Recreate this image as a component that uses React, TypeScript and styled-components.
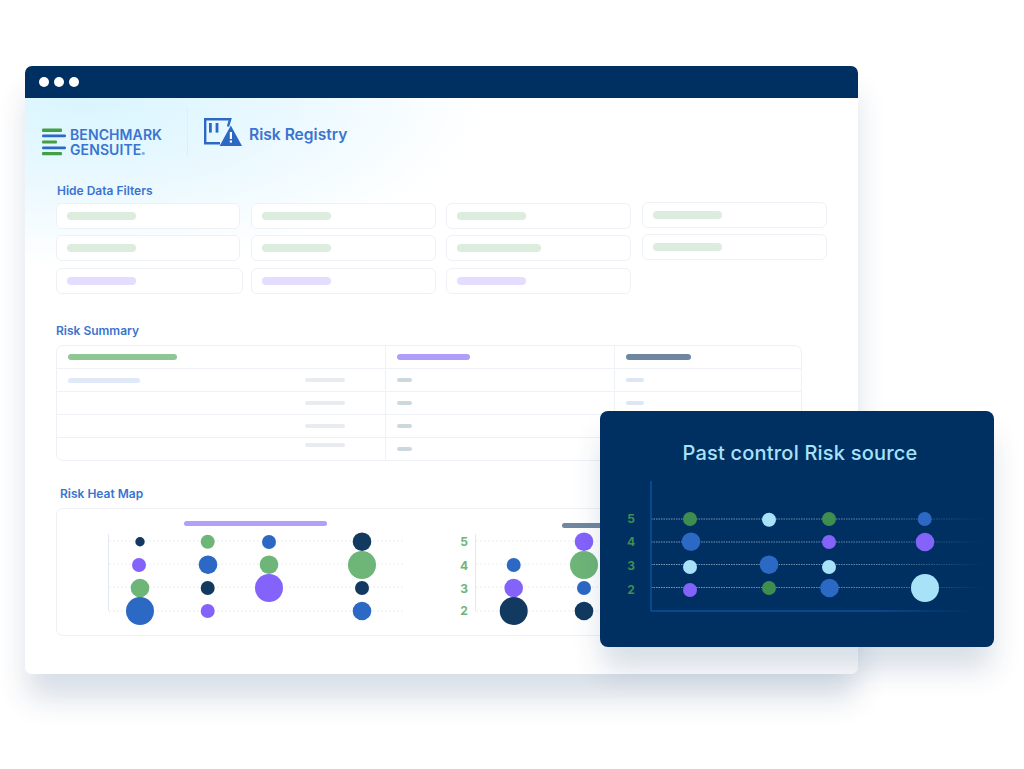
import styled, { createGlobalStyle } from 'styled-components'

const NAVY = '#002f61'
const DEEP = '#12395f'
const BLUE = '#2c69c4'
const GREEN = '#6eb578'
const DARK_GREEN = '#3e8e4f'
const PURPLE = '#8463fb'
const SKY = '#a8e2f8'
const TEXT_BLUE = '#3a74cf'

type Bubble = [number, number, number, string]

const leftBubbles: Bubble[] = [
  [140, 541.7, 4.7, DEEP],
  [139, 565, 7, PURPLE],
  [140, 588, 9.3, GREEN],
  [140, 611, 14, BLUE],
  [207.7, 541.7, 7, GREEN],
  [208, 564.7, 9.3, BLUE],
  [207.7, 588, 7, DEEP],
  [207.7, 611, 7, PURPLE],
  [269, 542, 7, BLUE],
  [269, 564.7, 9.3, GREEN],
  [269, 588, 14, PURPLE],
  [362, 541.7, 9.3, DEEP],
  [362, 565, 14, GREEN],
  [362, 588, 7, DEEP],
  [362, 611, 9.3, BLUE],
]

const rightBubbles: Bubble[] = [
  [513.7, 565, 7, BLUE],
  [513.7, 588, 9.3, PURPLE],
  [513.7, 611, 14, DEEP],
  [584, 541.7, 9.3, PURPLE],
  [584, 565, 14, GREEN],
  [584, 588, 7, BLUE],
  [584, 611, 9.3, DEEP],
]

const cardBubbles: Bubble[] = [
  [690, 519, 7, DARK_GREEN],
  [691, 541.7, 9.3, BLUE],
  [690, 567, 7, SKY],
  [690, 590, 7, PURPLE],
  [769, 519.7, 7, SKY],
  [769, 564.7, 9.3, BLUE],
  [769, 588, 7, DARK_GREEN],
  [829, 519, 7, DARK_GREEN],
  [829, 542, 7, PURPLE],
  [829, 567, 7, SKY],
  [829.5, 588, 9.3, BLUE],
  [924.7, 519, 7, BLUE],
  [925, 542, 9.3, PURPLE],
  [925, 588, 14, SKY],
]

const filterColumns = [
  {
    offset: 0,
    cards: [
      { width: 184, bar: 69, tone: 'green' },
      { width: 184, bar: 69, tone: 'green' },
      { width: 187, bar: 69, tone: 'purple' },
    ],
  },
  {
    offset: 0,
    cards: [
      { width: 185, bar: 69, tone: 'green' },
      { width: 185, bar: 69, tone: 'green' },
      { width: 185, bar: 69, tone: 'purple' },
    ],
  },
  {
    offset: 0,
    cards: [
      { width: 185, bar: 69, tone: 'green' },
      { width: 185, bar: 84, tone: 'green' },
      { width: 185, bar: 69, tone: 'purple' },
    ],
  },
  {
    offset: 1,
    cards: [
      { width: 185, bar: 69, tone: 'green' },
      { width: 185, bar: 69, tone: 'green' },
    ],
  },
]

const summaryRows = [0, 1, 2, 3]

function Bubbles({ items }: { items: Bubble[] }) {
  return (
    <>
      {items.map(([cx, cy, r, fill]) => (
        <circle key={`${cx}-${cy}`} cx={cx} cy={cy} r={r} fill={fill} />
      ))}
    </>
  )
}

function LogoMark() {
  return (
    <svg width="24" height="28" viewBox="42 127.5 24 28">
      <rect x="42" y="128" width="20" height="3.4" rx="1" fill="#43a047" />
      <rect x="42" y="134" width="24" height="2.8" rx="1.2" fill={BLUE} />
      <rect x="42" y="140" width="15" height="3" rx="1" fill="#43a047" />
      <rect x="42" y="146" width="24" height="2.8" rx="1.2" fill={BLUE} />
      <rect x="42" y="151.6" width="20" height="3.2" rx="1" fill="#43a047" />
    </svg>
  )
}

function RegistryIcon() {
  return (
    <svg width="40" height="30" viewBox="202 116 40 30">
      <path
        d="M227 125.5 L229.2 118.2 H204.2 V142.2 H219"
        fill="none"
        stroke={BLUE}
        strokeWidth="2.4"
      />
      <rect x="208" y="122" width="2.8" height="9.6" fill={BLUE} />
      <rect x="214.6" y="122" width="2.8" height="9.6" fill={BLUE} />
      <path d="M229.8 124.6 L241 145 H218.6 Z" fill={BLUE} />
      <rect x="228.8" y="131" width="2.2" height="7" fill="#fff" />
      <rect x="228.8" y="139.4" width="2.2" height="2.2" fill="#fff" />
    </svg>
  )
}

function LeftChart() {
  return (
    <ChartSvg width="370" height="122" viewBox="60 515 370 122">
      <rect x="184" y="521" width="143" height="5" rx="2.5" fill="#b19ffb" />
      {[541, 564, 587, 611].map((y) => (
        <line key={y} x1="109" x2="405" y1={y} y2={y} stroke="#e9edf1" strokeDasharray="2 2" />
      ))}
      <line x1="108.5" x2="108.5" y1="534" y2="611" stroke="#e3e9f1" />
      <Bubbles items={leftBubbles} />
    </ChartSvg>
  )
}

function RightChart() {
  return (
    <ChartSvg width="360" height="122" viewBox="440 515 360 122">
      <rect x="562" y="523" width="100" height="5" rx="2.5" fill="#71879f" />
      {[
        ['5', 545.5],
        ['4', 569.5],
        ['3', 592.5],
        ['2', 614.5],
      ].map(([label, y]) => (
        <AxisLabel key={label} x="464" y={y} fill="#6fb57a">
          {label}
        </AxisLabel>
      ))}
      {[541, 564, 587, 611].map((y) => (
        <line key={y} x1="476" x2="640" y1={y} y2={y} stroke="#e9edf1" strokeDasharray="2 2" />
      ))}
      <line x1="475.5" x2="475.5" y1="534" y2="611" stroke="#e3e9f1" />
      <Bubbles items={rightBubbles} />
    </ChartSvg>
  )
}

function CardChart() {
  return (
    <ChartSvg width="394" height="155" viewBox="600 470 394 155">
      <defs>
        <linearGradient id="gridFade" gradientUnits="userSpaceOnUse" x1="651" x2="985" y1="0" y2="0">
          <stop offset="0" stopColor="#7d9cbb" />
          <stop offset="0.7" stopColor="#5f83a8" />
          <stop offset="1" stopColor="#5f83a8" stopOpacity="0" />
        </linearGradient>
        <linearGradient id="baseFade" gradientUnits="userSpaceOnUse" x1="651" x2="975" y1="0" y2="0">
          <stop offset="0" stopColor="#0d5099" />
          <stop offset="0.7" stopColor="#0d5099" />
          <stop offset="1" stopColor="#0d5099" stopOpacity="0" />
        </linearGradient>
      </defs>
      {[
        ['5', 522.5],
        ['4', 546],
        ['3', 569.5],
        ['2', 593.5],
      ].map(([label, y]) => (
        <AxisLabel key={label} x="631" y={y} fill={DARK_GREEN}>
          {label}
        </AxisLabel>
      ))}
      {[519, 542, 564.5, 587.5].map((y) => (
        <line key={y} x1="651" x2="985" y1={y} y2={y} stroke="url(#gridFade)" strokeDasharray="1.5 1" />
      ))}
      <line x1="651" x2="651" y1="481" y2="611" stroke="#0d5099" strokeWidth="1.6" />
      <line x1="651" x2="975" y1="611" y2="611" stroke="url(#baseFade)" strokeWidth="1.6" />
      <Bubbles items={cardBubbles} />
    </ChartSvg>
  )
}

export default function App() {
  return (
    <Stage>
      <GlobalStyle />
      <Window>
        <TitleBar>
          <Dot />
          <Dot />
          <Dot />
        </TitleBar>
        <Body>
          <Masthead>
            <Logo>
              <LogoMark />
              <LogoText>
                <span>BENCHMARK</span>
                <span>
                  GENSUITE<small>®</small>
                </span>
              </LogoText>
            </Logo>
            <Divider />
            <RegistryIcon />
            <PageTitle>Risk Registry</PageTitle>
          </Masthead>

          <Content>
            <SectionLabel $indent={1} $top={28} $bottom={5}>
              Hide Data Filters
            </SectionLabel>
            <Filters>
              {filterColumns.map((column, idx) => (
                <FilterColumn key={idx} $offset={column.offset}>
                  {column.cards.map((card, cardIdx) => (
                    <FilterCard key={cardIdx} $width={card.width}>
                      <FilterBar $width={card.bar} $tone={card.tone} />
                    </FilterCard>
                  ))}
                </FilterColumn>
              ))}
            </Filters>

            <SectionLabel $indent={0} $top={30} $bottom={7}>
              Risk Summary
            </SectionLabel>
            <Table>
              <Row>
                <Cell>
                  <Bar $width={109} $height={6} $color="#8fc794" />
                </Cell>
                <Cell>
                  <Bar $width={73} $height={6} $color="#b09cfb" />
                </Cell>
                <Cell>
                  <Bar $width={65} $height={6} $color="#6f86a3" />
                </Cell>
              </Row>
              {summaryRows.map((row) => (
                <Row key={row}>
                  <Cell $spread>
                    {row === 0 ? <Bar $width={72} $height={5} $color="#dfe9f7" /> : <span />}
                    <Bar $width={40} $height={4} $color="#e8ecf0" $raise={row === 3 ? 4 : 0} />
                  </Cell>
                  <Cell $nudge={1}>
                    <Bar $width={15} $height={4} $color="#cdd8de" />
                  </Cell>
                  <Cell>
                    <Bar $width={18} $height={4} $color="#dbe7f5" />
                  </Cell>
                </Row>
              ))}
            </Table>

            <SectionLabel $indent={4} $top={26} $bottom={7}>
              Risk Heat Map
            </SectionLabel>
            <HeatPanel>
              <LeftChart />
              <RightChart />
            </HeatPanel>
          </Content>
        </Body>
      </Window>

      <FloatingCard>
        <CardTitle>Past control Risk source</CardTitle>
        <CardChart />
      </FloatingCard>
    </Stage>
  )
}

const GlobalStyle = createGlobalStyle`
  html,
  body {
    margin: 0;
    background: #fff;
    font-family: Inter, 'Liberation Sans', sans-serif;
  }
`

const Stage = styled.div`
  position: relative;
  width: 1024px;
  height: 769px;
  padding: 66px 0 0 25px;
  box-sizing: border-box;
  overflow: hidden;
  background: #fff;
`

const Window = styled.div`
  width: 833px;
  height: 608px;
  border-radius: 7px;
  background: #fff;
  box-shadow: 0 26px 30px -2px rgba(0, 47, 97, 0.16);
  display: flex;
  flex-direction: column;
`

const TitleBar = styled.div`
  height: 32px;
  flex: none;
  display: flex;
  align-items: center;
  gap: 5px;
  padding-left: 14px;
  background: ${NAVY};
  border-radius: 7px 7px 0 0;
`

const Dot = styled.span`
  width: 10px;
  height: 10px;
  border-radius: 50%;
  background: #fff;
`

const Body = styled.div`
  flex: 1;
  border-radius: 0 0 7px 7px;
  background:
    radial-gradient(ellipse 400px 170px at 60px 0, #d9f5ff 0%, rgba(225, 246, 255, 0.7) 50%, rgba(255, 255, 255, 0) 100%),
    #fff;
`

const Masthead = styled.div`
  display: flex;
  align-items: center;
  height: 49px;
  margin-top: 9px;
  padding-left: 17px;
`

const Logo = styled.div`
  display: flex;
  align-items: center;
  gap: 4px;
  width: 145px;
  padding-top: 20px;
`

const LogoText = styled.div`
  display: flex;
  flex-direction: column;
  margin-top: 6px;
  color: ${TEXT_BLUE};
  font-size: 14px;
  font-weight: 600;
  line-height: 15px;
  letter-spacing: 0.1px;

  small {
    font-size: 5px;
    vertical-align: -1px;
  }
`

const Divider = styled.div`
  width: 1px;
  height: 49px;
  background: #dfeef7;
  margin-right: 15px;
`

const PageTitle = styled.h1`
  margin: 0 0 0 6px;
  padding-top: 6px;
  color: ${TEXT_BLUE};
  font-size: 15.6px;
  font-weight: 600;
  line-height: 20px;
`

const Content = styled.div`
  padding-left: 31px;
`

const SectionLabel = styled.div<{ $indent: number; $top: number; $bottom: number }>`
  margin: ${({ $top }) => $top}px 0 ${({ $bottom }) => $bottom}px ${({ $indent }) => $indent}px;
  color: ${TEXT_BLUE};
  font-size: 12px;
  font-weight: 600;
  line-height: 14px;
`

const Filters = styled.div`
  display: flex;
  gap: 10px;
  height: 91px;
`

const FilterColumn = styled.div<{ $offset: number }>`
  display: flex;
  flex-direction: column;
  gap: 6px;
  flex: none;
  width: 185px;
  margin: ${({ $offset }) => -$offset}px 0 0 ${({ $offset }) => $offset}px;

  & > :nth-child(3) {
    margin-top: 1px;
  }
`

const FilterCard = styled.div<{ $width: number }>`
  box-sizing: border-box;
  width: ${({ $width }) => $width}px;
  height: 26px;
  padding-left: 10px;
  display: flex;
  align-items: center;
  border: 1px solid #f0f1f7;
  border-radius: 6px;
  background: #fff;
`

const FilterBar = styled.span<{ $width: number; $tone: string }>`
  width: ${({ $width }) => $width}px;
  height: 8px;
  border-radius: 4px;
  background: ${({ $tone }) => ($tone === 'purple' ? '#e4ddff' : '#dcecdd')};
`

const Table = styled.div`
  box-sizing: border-box;
  width: 746px;
  border: 1px solid #eef0f6;
  border-radius: 7px;
  background: #fff;
`

const Row = styled.div`
  display: grid;
  grid-template-columns: 328px 229px 1fr;
  height: 22px;

  & + & {
    border-top: 1px solid #eef1f6;
  }
`

const Cell = styled.div<{ $spread?: boolean; $nudge?: number }>`
  display: flex;
  align-items: center;
  justify-content: ${({ $spread }) => ($spread ? 'space-between' : 'flex-start')};
  padding: 0 ${({ $spread }) => ($spread ? 40 : 0)}px 0 ${({ $nudge }) => 11 + ($nudge ?? 0)}px;

  & + & {
    border-left: 1px solid #eef1f6;
    padding-left: ${({ $nudge }) => 10 + ($nudge ?? 0)}px;
  }
`

const Bar = styled.span<{ $width: number; $height: number; $color: string; $raise?: number }>`
  width: ${({ $width }) => $width}px;
  height: ${({ $height }) => $height}px;
  border-radius: 3px;
  background: ${({ $color }) => $color};
  margin-bottom: ${({ $raise }) => ($raise ?? 0) * 2}px;
`

const HeatPanel = styled.div`
  box-sizing: border-box;
  width: 746px;
  height: 128px;
  padding: 6px 0 0 3px;
  display: flex;
  gap: 10px;
  border: 1px solid #eef0f4;
  border-radius: 7px;
  background: #fff;
`

const ChartSvg = styled.svg`
  flex: none;
  display: block;
  overflow: hidden;
`

const AxisLabel = styled.text`
  font-family: Inter, 'Liberation Sans', sans-serif;
  font-size: 12px;
  font-weight: 700;
  text-anchor: middle;
`

const FloatingCard = styled.div`
  position: absolute;
  left: 600px;
  top: 411px;
  width: 394px;
  height: 236px;
  box-sizing: border-box;
  border-radius: 8px;
  background: ${NAVY};
  box-shadow: 0 24px 30px -2px rgba(0, 47, 97, 0.16);
  padding-top: 28px;
`

const CardTitle = styled.h2`
  margin: 0 0 3px;
  padding-left: 6px;
  height: 28px;
  color: ${SKY};
  font-size: 20px;
  font-weight: 500;
  line-height: 28px;
  text-align: center;
  letter-spacing: 0.2px;
`
